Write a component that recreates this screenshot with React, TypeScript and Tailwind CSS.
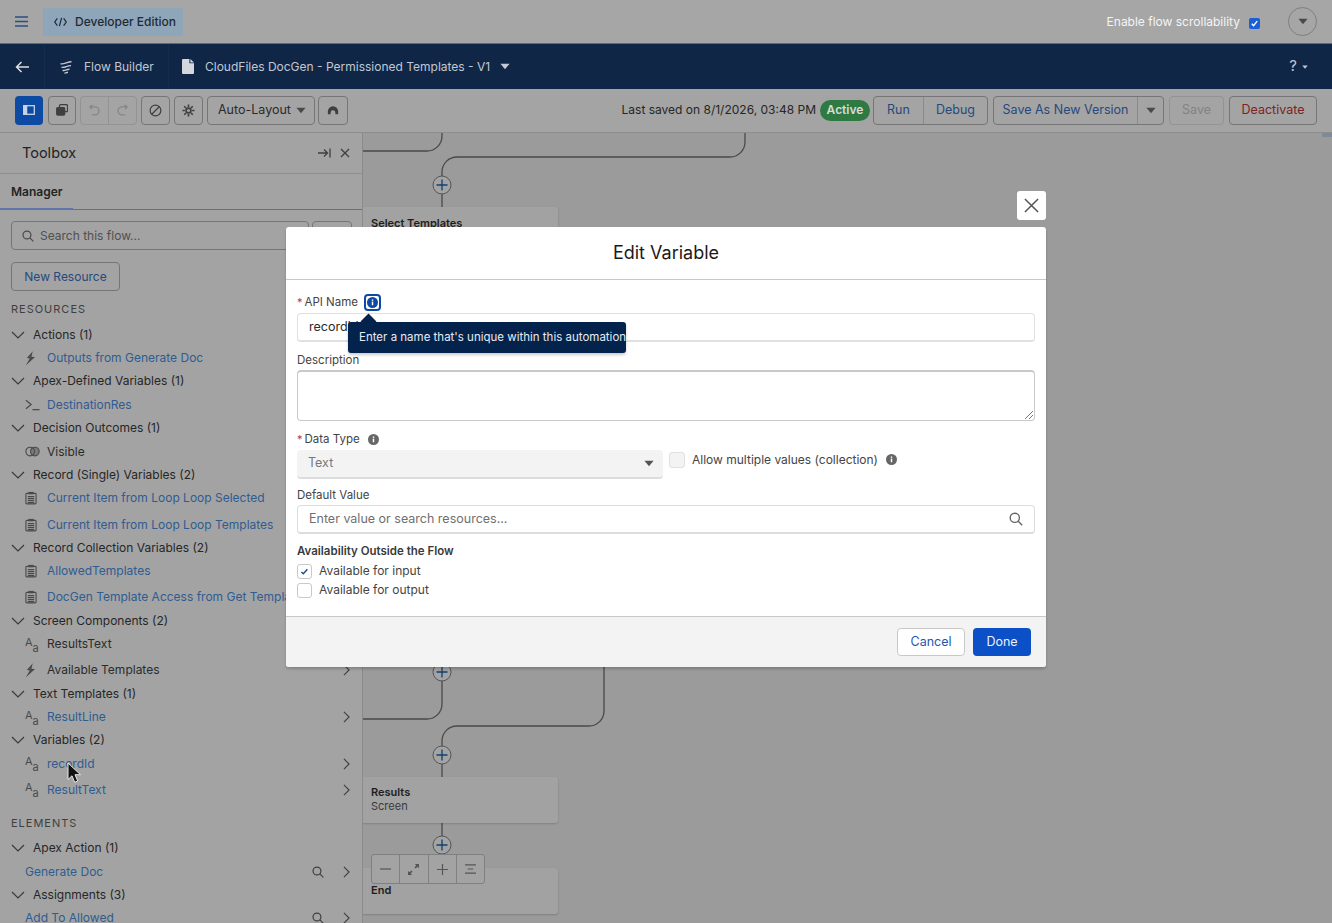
import React from "react";

const font = { fontFamily: "Inter, 'Liberation Sans', sans-serif" };

const Caret = ({ className = "" }: { className?: string }) => (
  <svg viewBox="0 0 12 8" className={className} fill="currentColor"><path d="M0.5 0.8h11L6 7.4z" /></svg>
);

const ChevDown = () => (
  <svg viewBox="0 0 14 8" className="w-[14px] h-[8px] shrink-0 text-[#3a3a3a]" fill="none" stroke="currentColor" strokeWidth="1.2"><path d="M1 1l6 6 6-6" /></svg>
);

const ChevRight = () => (
  <svg viewBox="0 0 8 14" className="w-[7px] h-[12px] text-[#3f3f3f]" fill="none" stroke="currentColor" strokeWidth="1.3"><path d="M1 1l6 6-6 6" /></svg>
);

const Search = ({ className = "w-[13px] h-[13px] text-[#3f3f3f]" }: { className?: string }) => (
  <svg viewBox="0 0 14 14" className={className} fill="none" stroke="currentColor" strokeWidth="1.4"><circle cx="5.8" cy="5.8" r="4.6" /><path d="M9.2 9.2l4 4" /></svg>
);

const Bolt = () => (
  <svg viewBox="0 0 12 16" className="w-[11px] h-[15px] text-[#4a4a4a]" fill="currentColor"><path d="M8.5 0L2 7.5l3.2.6L0.8 15.6 11 6.4 7 6z" /></svg>
);

const Prompt = () => (
  <svg viewBox="0 0 16 12" className="w-[15px] h-[12px] text-[#4a4a4a]" fill="none" stroke="currentColor" strokeWidth="1.3"><path d="M1 1l5.5 4.5L1 10M8 11h7.5" /></svg>
);

const Venn = () => (
  <svg viewBox="0 0 16 11" className="w-[15px] h-[11px] text-[#4a4a4a]" fill="none" stroke="currentColor" strokeWidth="1.2"><circle cx="5.5" cy="5.5" r="4.6" /><circle cx="10.5" cy="5.5" r="4.6" fill="currentColor" fillOpacity=".45" /></svg>
);

const Clip = () => (
  <svg viewBox="0 0 13 14" className="w-[12px] h-[14px] text-[#4a4a4a]" fill="none" stroke="currentColor" strokeWidth="1.2"><rect x="1" y="2" width="11" height="11.4" rx="1" /><rect x="3.6" y="0.4" width="5.8" height="2.6" fill="currentColor" stroke="none" /><path d="M3 5.5h7M3 7.7h7M3 9.9h7M3 12h7" /></svg>
);

const Aa = () => (
  <span className="flex items-start w-[15px] h-[17px] text-[#4a4a4a] leading-none">
    <span className="text-[11px] leading-[12px]">A</span>
    <span className="text-[11px] leading-[12px] mt-[6px]">a</span>
  </span>
);

const icons: Record<string, React.ReactNode> = {
  bolt: <Bolt />,
  prompt: <Prompt />,
  venn: <Venn />,
  clip: <Clip />,
  aa: <Aa />,
};

type Child = { label: string; icon?: string; dark?: boolean; find?: boolean };
const Row = ({ c }: { c: Child }) => (
  <div className={`flex items-center h-[23.4px] pr-[12px] ${c.icon ? "pl-[25px]" : "pl-[25px]"}`}>
    {c.icon && <span className="w-[22px] shrink-0 flex items-center">{icons[c.icon]}</span>}
    <span className={`text-[12px] whitespace-nowrap ${c.dark ? "text-[#2b2b2b]" : "text-[#2f5c92]"}`}>{c.label}</span>
    <span className="flex-1" />
    {c.find && <span className="mr-[19px] flex"><Search className="w-[12px] h-[12px] text-[#3f3f3f]" /></span>}
    <ChevRight />
  </div>
);

const Group = ({ title, items }: { title: string; items: Child[] }) => (
  <div className="flex flex-col">
    <div className="flex items-center gap-[8px] h-[23.4px] pl-[11px]">
      <ChevDown />
      <span className="text-[12px] text-[#262626] whitespace-nowrap">{title}</span>
    </div>
    <div className="flex flex-col gap-[2.7px]">
      {items.map((c) => <Row key={c.label} c={c} />)}
    </div>
  </div>
);

const resources: { title: string; items: Child[] }[] = [
  { title: "Actions (1)", items: [{ label: "Outputs from Generate Doc", icon: "bolt" }] },
  { title: "Apex-Defined Variables (1)", items: [{ label: "DestinationRes", icon: "prompt" }] },
  { title: "Decision Outcomes (1)", items: [{ label: "Visible", icon: "venn", dark: true }] },
  { title: "Record (Single) Variables (2)", items: [{ label: "Current Item from Loop Loop Selected", icon: "clip" }, { label: "Current Item from Loop Loop Templates", icon: "clip" }] },
  { title: "Record Collection Variables (2)", items: [{ label: "AllowedTemplates", icon: "clip" }, { label: "DocGen Template Access from Get Templates", icon: "clip" }] },
  { title: "Screen Components (2)", items: [{ label: "ResultsText", icon: "aa", dark: true }, { label: "Available Templates", icon: "bolt", dark: true }] },
  { title: "Text Templates (1)", items: [{ label: "ResultLine", icon: "aa" }] },
  { title: "Variables (2)", items: [{ label: "recordId", icon: "aa" }, { label: "ResultText", icon: "aa" }] },
];

const elements: { title: string; items: Child[] }[] = [
  { title: "Apex Action (1)", items: [{ label: "Generate Doc", find: true }] },
  { title: "Assignments (3)", items: [{ label: "Add To Allowed", find: true }] },
];

const ToolBtn = ({ children, className = "" }: { children: React.ReactNode; className?: string }) => (
  <div className={`h-[29px] flex items-center justify-center rounded-[4px] border border-[#767676] text-[#3f3f3f] ${className}`}>{children}</div>
);

const Info = ({ className = "w-[12px] h-[12px] text-[#5c5c5c]" }: { className?: string }) => (
  <svg viewBox="0 0 12 12" className={className}><circle cx="6" cy="6" r="6" fill="currentColor" /><rect x="5.2" y="5" width="1.6" height="4" fill="#fff" /><rect x="5.2" y="2.7" width="1.6" height="1.5" fill="#fff" /></svg>
);

const Star = () => <span className="text-[#c23934] text-[11px] mr-[2px] leading-none">*</span>;

const Plus = ({ cx, cy }: { cx: number; cy: number }) => (
  <g>
    <circle cx={cx} cy={cy} r="9" fill="#a3a3a3" stroke="#555" strokeWidth="1" />
    <path d={`M${cx - 5.5} ${cy}h11M${cx} ${cy - 5.5}v11`} stroke="#12406f" strokeWidth="1.3" />
  </g>
);

const Node = ({ title, sub, className }: { title: string; sub?: string; className: string }) => (
  <div className={`absolute left-0 w-[195px] bg-[#a2a2a2] rounded-r-[3px] shadow-[0_1px_2px_rgba(0,0,0,0.18)] pl-[8px] ${className}`}>
    <div className="text-[11px] font-semibold text-[#1e1e1e] leading-[14px] whitespace-nowrap">{title}</div>
    {sub && <div className="text-[11px] text-[#3a3a3a] leading-[15px]">{sub}</div>}
  </div>
);

const Input = ({ className = "", children }: { className?: string; children?: React.ReactNode }) => (
  <div className={`h-[29px] rounded-[4px] border border-[#d4d4d4] border-b-2 bg-white flex items-center px-[11px] ${className}`}>{children}</div>
);

export default function App() {
  return (
    <div style={font} className="relative w-[1332px] h-[923px] overflow-hidden flex flex-col bg-[#9b9b9b]">
      {/* top bar */}
      <header className="h-[43px] shrink-0 bg-[#a6a6a6] flex items-center pl-[15px] pr-[15px]">
        <svg viewBox="0 0 13 11" className="w-[13px] h-[11px] text-[#27507f]" fill="none" stroke="currentColor" strokeWidth="1.5"><path d="M0 1h13M0 5.5h13M0 10h13" /></svg>
        <div className="ml-[15px] w-[140px] h-[28px] rounded-[2px] bg-[#8fa6ba] flex items-center gap-[8px] pl-[11px]">
          <svg viewBox="0 0 14 10" className="w-[13px] h-[10px] text-[#1f2a33]" fill="none" stroke="currentColor" strokeWidth="1.3"><path d="M3.6 1L.8 5l2.8 4M10.4 1l2.8 4-2.8 4M8.2 .6L5.8 9.4" /></svg>
          <span className="text-[12px] font-medium text-[#1f2a33] whitespace-nowrap">Developer Edition</span>
        </div>
        <span className="flex-1" />
        <span className="text-[12px] text-[#f4f4f4] whitespace-nowrap">Enable flow scrollability</span>
        <span className="ml-[9px] mt-[3px] w-[11px] h-[11px] rounded-[2px] bg-[#1a5fd6] flex items-center justify-center">
          <svg viewBox="0 0 10 10" className="w-[9px] h-[9px]" fill="none" stroke="#fff" strokeWidth="1.6"><path d="M2 5.2l2 2.2 4-5" /></svg>
        </span>
        <span className="ml-[28px] w-[29px] h-[29px] rounded-full border border-[#7f7f7f] flex items-center justify-center text-[#4a4a4a]">
          <Caret className="w-[10px] h-[7px]" />
        </span>
      </header>

      {/* nav */}
      <nav className="h-[46px] shrink-0 bg-[#0f2647] border-t border-[#5a6a80] flex items-center text-[#c2c8d1]">
        <div className="w-[44px] flex justify-center">
          <svg viewBox="0 0 14 12" className="w-[14px] h-[12px] text-[#e0e0e0]" fill="none" stroke="currentColor" strokeWidth="1.5"><path d="M14 6H1.5M6.5 1L1.5 6l5 5" /></svg>
        </div>
        <div className="w-[124px] h-full flex items-center pl-[14px] border-l border-[#132c50]">
          <svg viewBox="0 0 14 14" className="w-[14px] h-[14px] text-[#c2c8d1]" fill="none" stroke="currentColor" strokeWidth="1.4"><path d="M1.5 3.6c3 1.4 7-2 11-1.8M2.5 7.2c3 1.2 6-2 9.5-1.5M3.5 10.3c2.4.9 4.6-1.3 7-1M5.5 13c1.4.3 2.4-.6 3.5-.7" /></svg>
          <span className="ml-[11px] text-[12px] whitespace-nowrap">Flow Builder</span>
        </div>
        <div className="h-full flex items-center pl-[13px] border-l border-[#132c50]">
          <svg viewBox="0 0 12 15" className="w-[12px] h-[15px] text-[#d4d7dc]" fill="currentColor"><path d="M1 0h6.4v4.2H12V14a1 1 0 0 1-1 1H1a1 1 0 0 1-1-1V1a1 1 0 0 1 1-1zM8.4 0L12 3.4H8.4z" /></svg>
          <span className="ml-[11px] text-[12px] whitespace-nowrap">CloudFiles DocGen - Permissioned Templates - V1</span>
          <Caret className="ml-[10px] w-[10px] h-[7px] text-[#c2c8d1]" />
        </div>
        <span className="flex-1" />
        <span className="text-[15px] text-[#c2c8d1]">?</span>
        <Caret className="ml-[5px] mr-[24px] w-[6px] h-[4px] text-[#c2c8d1]" />
      </nav>

      {/* toolbar */}
      <div className="h-[44px] shrink-0 bg-[#a4a4a4] border-b border-[#8d8d8d] flex items-center pl-[15px] pr-[15px] pb-[1px]">
        <div className="w-[28px] h-[29px] rounded-[4px] bg-[#0d4aa3] flex items-center justify-center">
          <svg viewBox="0 0 12 10" className="w-[12px] h-[10px]" fill="none" stroke="#c8d4e6" strokeWidth="1.3"><rect x=".7" y=".7" width="10.6" height="8.6" /><rect x="1" y="1" width="2.6" height="8" fill="#c8d4e6" /></svg>
        </div>
        <ToolBtn className="ml-[5px] w-[28px]">
          <svg viewBox="0 0 12 12" className="w-[12px] h-[12px]" fill="none" stroke="currentColor" strokeWidth="1.2"><rect x="3.5" y=".7" width="8" height="7" rx="1" /><rect x=".7" y="3.5" width="8" height="7.6" rx="1" fill="currentColor" /></svg>
        </ToolBtn>
        <div className="ml-[4px] w-[57px] h-[29px] flex rounded-[4px] border border-[#939393] text-[#858585]">
          <div className="flex-1 flex items-center justify-center border-r border-[#939393]">
            <svg viewBox="0 0 12 13" className="w-[11px] h-[12px]" fill="none" stroke="currentColor" strokeWidth="1.4"><path d="M3 5.5L1 3l2.8-2M1.5 3h5a4.2 4.2 0 0 1 0 8.8H3" /></svg>
          </div>
          <div className="flex-1 flex items-center justify-center">
            <svg viewBox="0 0 12 13" className="w-[11px] h-[12px]" fill="none" stroke="currentColor" strokeWidth="1.4"><path d="M9 5.5L11 3 8.2 1M10.5 3h-5a4.2 4.2 0 0 0 0 8.8H9" /></svg>
          </div>
        </div>
        <ToolBtn className="ml-[4px] w-[29px]">
          <svg viewBox="0 0 14 14" className="w-[13px] h-[13px]" fill="none" stroke="currentColor" strokeWidth="1.3"><circle cx="7" cy="7" r="5.8" /><path d="M3 11L11 3" /></svg>
        </ToolBtn>
        <ToolBtn className="ml-[4px] w-[29px]">
          <svg viewBox="0 0 14 14" className="w-[13px] h-[13px]" fill="none" stroke="currentColor" strokeWidth="1.8"><circle cx="7" cy="7" r="2.6" /><path d="M7 .5v2.6M7 10.9v2.6M.5 7h2.6M10.9 7h2.6M2.4 2.4l1.9 1.9M9.7 9.7l1.9 1.9M2.4 11.6l1.9-1.9M9.7 4.3l1.9-1.9" /></svg>
        </ToolBtn>
        <ToolBtn className="ml-[4px] w-[108px] justify-start pl-[10px] pr-[8px]">
          <span className="text-[12.5px] text-[#2b2b2b] whitespace-nowrap">Auto-Layout</span>
          <span className="flex-1" />
          <Caret className="w-[10px] h-[7px] text-[#4a4a4a]" />
        </ToolBtn>
        <ToolBtn className="ml-[3px] w-[30px]">
          <svg viewBox="0 0 14 11" className="w-[12px] h-[10px]" fill="currentColor"><path d="M1 7a6 6 0 0 1 12 0v3.4h-3.2V8.6a2.8 2.8 0 0 0-5.6 0v1.8H1z" /></svg>
        </ToolBtn>
        <span className="flex-1" />
        <span className="text-[12px] text-[#262626] whitespace-nowrap">Last saved on 8/1/2026, 03:48 PM</span>
        <span className="ml-[4px] w-[50px] h-[21px] rounded-full bg-[#2f7a43] text-[#d7ddd8] text-[12px] font-semibold flex items-center justify-center">Active</span>
        <div className="ml-[3px] w-[115px] h-[29px] flex rounded-[4px] border border-[#767676] text-[12.5px] text-[#27497c]">
          <span className="w-[50px] flex items-center justify-center border-r border-[#8a8a8a]">Run</span>
          <span className="flex-1 flex items-center justify-center">Debug</span>
        </div>
        <div className="ml-[5px] w-[171px] h-[29px] flex rounded-[4px] border border-[#767676] text-[12.5px] text-[#27497c]">
          <span className="w-[144px] flex items-center justify-center border-r border-[#8a8a8a] whitespace-nowrap">Save As New Version</span>
          <span className="flex-1 flex items-center justify-center text-[#4a4a4a]"><Caret className="w-[10px] h-[7px]" /></span>
        </div>
        <div className="ml-[5px] w-[55px] h-[29px] rounded-[4px] border border-[#939393] text-[12.5px] text-[#838383] flex items-center justify-center">Save</div>
        <div className="ml-[5px] w-[88px] h-[29px] rounded-[4px] border border-[#767676] text-[12.5px] text-[#7e2222] flex items-center justify-center">Deactivate</div>
      </div>

      {/* body */}
      <div className="flex-1 flex min-h-0">
        <aside className="w-[363px] shrink-0 bg-[#a3a3a3] border-r border-[#8b8b8b] overflow-hidden">
          <div className="h-[41px] border-b border-[#8f8f8f] flex items-center pl-[22px] pr-[12px]">
            <span className="text-[14.5px] text-[#242424]">Toolbox</span>
            <span className="flex-1" />
            <svg viewBox="0 0 13 10" className="w-[13px] h-[10px] text-[#3f3f3f]" fill="none" stroke="currentColor" strokeWidth="1.3"><path d="M0 5h9M6 1.5L9.5 5 6 8.500M12 .5v9" /></svg>
            <svg viewBox="0 0 10 10" className="ml-[9px] w-[10px] h-[10px] text-[#3f3f3f]" fill="none" stroke="currentColor" strokeWidth="1.3"><path d="M1 1l8 8M9 1l-8 8" /></svg>
          </div>
          <div className="h-[36px] border-b border-[#6f6f6f] relative flex items-center pl-[11px]">
            <span className="text-[12px] font-semibold text-[#242424]">Manager</span>
            <span className="absolute left-0 bottom-[-1px] w-[73px] h-[2px] bg-[#5f74ad]" />
          </div>
          <div className="flex gap-[3px] mt-[11px] pl-[11px]">
            <div className="w-[298px] h-[29px] rounded-[4px] border border-[#767676] flex items-center pl-[10px] gap-[6px]">
              <Search className="w-[12px] h-[12px] text-[#4a4a4a]" />
              <span className="text-[12px] text-[#505050]">Search this flow...</span>
            </div>
            <div className="w-[40px] h-[29px] rounded-[4px] border border-[#767676]" />
          </div>
          <div className="mt-[12px] ml-[11px] w-[109px] h-[29px] rounded-[4px] border border-[#767676] flex items-center justify-center text-[12px] text-[#27497c]">New Resource</div>
          <div className="mt-[11px] h-[14px] pl-[11px] text-[11px] tracking-[0.09em] text-[#3f3f3f] leading-[14px]">RESOURCES</div>
          <div className="mt-[7px] flex flex-col">
            {resources.map((g) => <Group key={g.title} {...g} />)}
          </div>
          <div className="mt-[14px] h-[14px] pl-[11px] text-[11px] tracking-[0.09em] text-[#3f3f3f] leading-[14px]">ELEMENTS</div>
          <div className="mt-[7px] flex flex-col">
            {elements.map((g) => <Group key={g.title} {...g} />)}
          </div>
        </aside>

        <main className="relative flex-1 overflow-hidden">
          <svg className="absolute left-0 top-0 w-[969px] h-[790px]" viewBox="0 0 969 790" fill="none">
            <g stroke="#4a4a4a" strokeWidth="1.3">
              <path d="M0 18H64A15 15 0 0 0 79 3V0" />
              <path d="M79 74V39A15 15 0 0 1 94 24H367A15 15 0 0 0 382 9V0" />
              <path d="M79 534V571A15 15 0 0 1 64 586H0" />
              <path d="M241 534V578A15 15 0 0 1 226 593H94A15 15 0 0 0 79 608V644" />
              <path d="M79 690V735" />
            </g>
            <Plus cx={79} cy={52} />
            <Plus cx={79} cy={539} />
            <Plus cx={79} cy={622} />
            <Plus cx={79} cy={712} />
          </svg>
          <Node title="Select Templates" className="top-[74px] h-[46px] pt-[9px]" />
          <Node title="Results" sub="Screen" className="top-[644px] h-[46px] pt-[8px]" />
          <Node title="End" className="top-[735px] h-[46px] pt-[15px]" />
          <div className="absolute left-[8px] top-[721px] w-[114px] h-[30px] flex rounded-[3px] border border-[#808080] bg-[#a3a3a3] text-[#555]">
            <span className="flex-1 flex items-center justify-center border-r border-[#808080]">
              <svg viewBox="0 0 12 2" className="w-[11px] h-[2px]" stroke="currentColor" strokeWidth="1.3"><path d="M0 1h12" /></svg>
            </span>
            <span className="flex-1 flex items-center justify-center border-r border-[#808080]">
              <svg viewBox="0 0 12 12" className="w-[11px] h-[11px]" fill="currentColor"><path d="M7.500 0H12v4.500L10.400 2.900 8.300 5 7 3.700l2.100-2.100zM4.500 12H0V7.500l1.600 1.600L3.700 7 5 8.300 2.900 10.400z" /></svg>
            </span>
            <span className="flex-1 flex items-center justify-center border-r border-[#808080]">
              <svg viewBox="0 0 12 12" className="w-[11px] h-[11px]" stroke="currentColor" strokeWidth="1.3"><path d="M0 6h12M6 0v12" /></svg>
            </span>
            <span className="flex-1 flex items-center justify-center">
              <svg viewBox="0 0 12 11" className="w-[11px] h-[10px]" stroke="currentColor" strokeWidth="1.2"><path d="M0 1h12M3 5.500h6M0 10h12" /></svg>
            </span>
          </div>
          <div className="absolute right-0 top-[-19px] w-[10px] h-[23px] bg-[#7c8a9a] flex items-center justify-center text-[#a8b0ba]">
            <svg viewBox="0 0 6 10" className="w-[6px] h-[10px]" fill="currentColor"><path d="M6 0v10L0 5z" /></svg>
          </div>
        </main>
      </div>

      {/* cursor */}
      <svg viewBox="0 0 15 22" className="absolute left-[67px] top-[762px] w-[15px] h-[22px] z-10">
        <path d="M1 1v16.500l4-3.700 2.700 6.500 3-1.300-2.700-6.300h5.500z" fill="#111" stroke="#e8e8e8" strokeWidth="1" />
      </svg>

      {/* close */}
      <div className="absolute left-[1017px] top-[191px] w-[29px] h-[29px] rounded-[3px] bg-white flex items-center justify-center text-[#555]">
        <svg viewBox="0 0 16 16" className="w-[15px] h-[15px]" fill="none" stroke="currentColor" strokeWidth="1.6"><path d="M1 1l14 14M15 1L1 15" /></svg>
      </div>

      {/* modal */}
      <section className="absolute left-[286px] top-[227px] w-[760px] h-[440px] rounded-[3px] bg-white shadow-[0_2px_3px_rgba(0,0,0,0.2)] flex flex-col overflow-hidden">
        <div className="h-[53px] shrink-0 border-b border-[#c9c9c9] flex items-center justify-center pb-[1px]">
          <h2 className="text-[18px] text-[#1a1a1a]">Edit Variable</h2>
        </div>
        <div className="flex-1 pt-[13px] px-[11px] flex flex-col text-[11.5px] text-[#444]">
          <div className="h-[19px] flex items-center">
            <Star /><span>API Name</span>
            <span className="ml-[6px] w-[17px] h-[17px] rounded-[4px] border-2 border-[#0d4aa8] flex items-center justify-center">
              <Info className="w-[11px] h-[11px] text-[#0d4aa8]" />
            </span>
          </div>
          <Input className="mt-[1px] border-[#e0e0e0]"><span className="text-[12.500px] text-[#2b2b2b]">recordId</span></Input>
          <div className="mt-[11px] h-[14px] leading-[14px]">Description</div>
          <div className="relative mt-[3px] h-[51px] rounded-[4px] border border-[#c9c9c9] border-t-2 bg-white">
            <svg viewBox="0 0 9 9" className="absolute right-[1px] bottom-[1px] w-[9px] h-[9px]" fill="none" stroke="#777" strokeWidth="1"><path d="M1 9l8-8M5 9l4-4" /></svg>
          </div>
          <div className="mt-[11px] h-[15px] flex items-center">
            <Star /><span>Data Type</span>
            <Info className="ml-[8px] w-[11px] h-[11px] text-[#666]" />
          </div>
          <div className="mt-[3px] flex">
            <div className="w-[366px] h-[29px] rounded-[4px] bg-[#f3f3f3] border-b-2 border-[#dcdcdc] flex items-center pl-[11px] pr-[9px] text-[12.5px] text-[#777]">
              <span>Text</span><span className="flex-1" />
              <Caret className="w-[10px] h-[7px] text-[#555]" />
            </div>
            <div className="ml-[6px] h-[19px] flex items-center">
              <span className="w-[16px] h-[16px] rounded-[3px] bg-[#f3f3f3] border border-[#e0e0e0]" />
              <span className="ml-[7px] text-[12px] text-[#444]">Allow multiple values (collection)</span>
              <Info className="ml-[8px] w-[11px] h-[11px] text-[#666]" />
            </div>
          </div>
          <div className="mt-[9px] h-[14px] leading-[14px]">Default Value</div>
          <Input className="mt-[3px] border-[#dcdcdc]">
            <span className="text-[12.5px] text-[#707070]">Enter value or search resources...</span>
            <span className="flex-1" />
            <Search className="w-[14px] h-[14px] text-[#666]" />
          </Input>
          <div className="mt-[10px] h-[14px] leading-[14px] font-semibold text-[#3a3a3a]">Availability Outside the Flow</div>
          <label className="mt-[5px] h-[16px] flex items-center">
            <span className="w-[15px] h-[15px] rounded-[3px] border border-[#c9c9c9] flex items-center justify-center">
              <svg viewBox="0 0 10 10" className="w-[9px] h-[9px]" fill="none" stroke="#1d4f9f" strokeWidth="1.7"><path d="M1.500 5.500l2.200 2 4.500-5" /></svg>
            </span>
            <span className="ml-[7px] text-[12px] text-[#444]">Available for input</span>
          </label>
          <label className="mt-[3px] h-[16px] flex items-center">
            <span className="w-[15px] h-[15px] rounded-[3px] border border-[#c9c9c9]" />
            <span className="ml-[7px] text-[12px] text-[#444]">Available for output</span>
          </label>
        </div>
        <div className="h-[51px] shrink-0 border-t border-[#c9c9c9] bg-[#f3f3f3] flex items-center justify-end pr-[15px] gap-[8px]">
          <span className="w-[68px] h-[28px] rounded-[4px] bg-white border border-[#c9c9c9] flex items-center justify-center text-[12.500px] text-[#1f56ad]">Cancel</span>
          <span className="w-[58px] h-[28px] rounded-[4px] bg-[#0b50c7] flex items-center justify-center text-[12.500px] text-[#eef]">Done</span>
        </div>
      </section>

      {/* tooltip */}
      <div className="absolute left-[348px] top-[322px] h-[31px] w-[278px] rounded-[3px] bg-[#03234d] flex items-center pl-[11px] text-[11.500px] text-[#e6ebf2] whitespace-nowrap shadow-[0_2px_3px_rgba(0,0,0,0.2)]">
        <span className="absolute left-[13px] top-[-8px] w-[15px] h-[15px] rotate-45 bg-[#03234d] scale-75 origin-center" />
        <span className="relative">Enter a name that's unique within this automation.</span>
      </div>
    </div>
  );
}
